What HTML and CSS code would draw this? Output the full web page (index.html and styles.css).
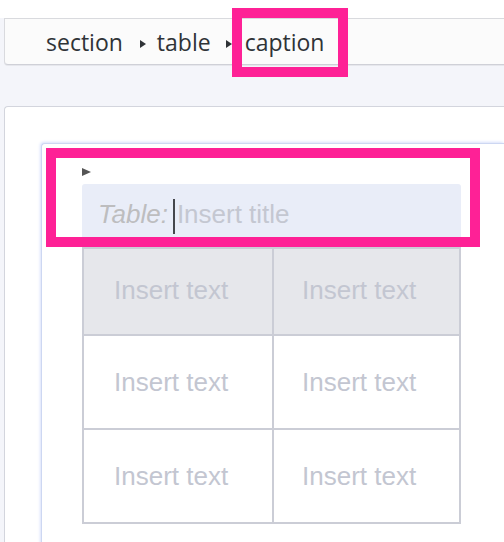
FILE: index.html
```html
<!DOCTYPE html>
<html>
<head>
<meta charset="utf-8">
<link rel="stylesheet" href="styles.css">
</head>
<body>
<div class="topstrip"></div>
<div class="crumbs">
  <span class="crumb">section</span>
  <span class="sep"></span>
  <span class="crumb">table</span>
  <span class="sep sep2"></span>
  <span class="crumb">caption</span>
</div>
<div class="card">
  <div class="editor">
    <div class="toggle"></div>
    <div class="caption"><span class="label">Table:</span><span class="caret"></span><span class="ph">Insert title</span></div>
    <div class="grid">
      <div class="cell head">Insert text</div>
      <div class="cell head right">Insert text</div>
      <div class="cell">Insert text</div>
      <div class="cell right">Insert text</div>
      <div class="cell">Insert text</div>
      <div class="cell right">Insert text</div>
    </div>
  </div>
</div>
<div class="mark mark-crumb"></div>
<div class="mark mark-caption"></div>
</body>
</html>
```
FILE: styles.css
```css
html, body {
  margin: 0;
  padding: 0;
}
body {
  background: #f4f5fa;
  width: 504px;
  height: 542px;
  overflow: hidden;
  position: relative;
}
.topstrip {
  height: 18px;
  background: #ffffff;
}
.crumbs {
  margin-left: 4px;
  height: 43px;
  padding-top: 2px;
  background: #fbfbfb;
  border: 1px solid #d9dade;
  border-right: none;
  border-bottom-color: #cfd0d7;
  border-radius: 0 0 0 4px;
  box-shadow: 0 1px 0 #e6e7ec;
  display: flex;
  align-items: center;
  padding-left: 41px;
  font-family: "Open Sans", "Noto Sans", sans-serif;
  font-size: 23px;
  color: #2f3337;
}
.crumb {
  line-height: 1;
}
.sep {
  width: 0;
  height: 0;
  border-top: 4px solid transparent;
  border-bottom: 4px solid transparent;
  border-left: 6px solid #2f3337;
  margin: 2px 11px 0 17px;
}
.sep2 {
  margin-left: 15px;
  margin-right: 13px;
}
.card {
  margin: 41px 0 0 4px;
  background: #ffffff;
  border: 1px solid #d3d5dd;
  border-right: none;
  border-bottom: none;
  border-radius: 4px 0 0 0;
  padding: 36px 0 0 36px;
  height: 500px;
}
.editor {
  background: #ffffff;
  border: 1px solid #cdd7f2;
  border-right: none;
  border-bottom: none;
  border-radius: 4px 0 0 0;
  box-shadow: -1px -1px 3px #d8e1fb;
  padding: 24px 0 0 40px;
  height: 460px;
}
.toggle {
  width: 0;
  height: 0;
  border-top: 4px solid transparent;
  border-bottom: 4px solid transparent;
  border-left: 9px solid #555555;
}
.caption {
  margin-top: 8px;
  width: 363px;
  height: 60px;
  padding: 0 0 3px 16px;
  background: #e9edf8;
  border-radius: 3px 3px 0 0;
  display: flex;
  align-items: center;
  font-family: "Liberation Sans", Arial, sans-serif;
  font-size: 26px;
}
.label {
  font-style: italic;
  color: #bdbdbf;
}
.caret {
  width: 2px;
  height: 35px;
  background: #45474c;
  margin: 5px 2px 0 5px;
}
.ph {
  color: #c4c7d1;
}
.grid {
  display: grid;
  grid-template-columns: 190px 187px;
  grid-template-rows: 87px 94px 94px;
  width: 377px;
  border-left: 2px solid #cbcdd6;
  border-top: 2px solid #cbcdd6;
}
.cell {
  border-right: 2px solid #cbcdd6;
  border-bottom: 2px solid #cbcdd6;
  display: flex;
  align-items: center;
  padding: 0 0 0 30px;
  font-family: "Liberation Sans", Arial, sans-serif;
  font-size: 26px;
  color: #c3c6d1;
}
.cell.right {
  padding-left: 28px;
}
.cell.head {
  background: #e6e7eb;
  padding-bottom: 3px;
}
.mark {
  position: absolute;
  border: 10px solid #fe2196;
  box-sizing: border-box;
}
.mark-crumb {
  left: 232px;
  top: 8px;
  width: 116px;
  height: 69px;
}
.mark-caption {
  left: 46px;
  top: 148px;
  width: 434px;
  height: 99px;
}
```
